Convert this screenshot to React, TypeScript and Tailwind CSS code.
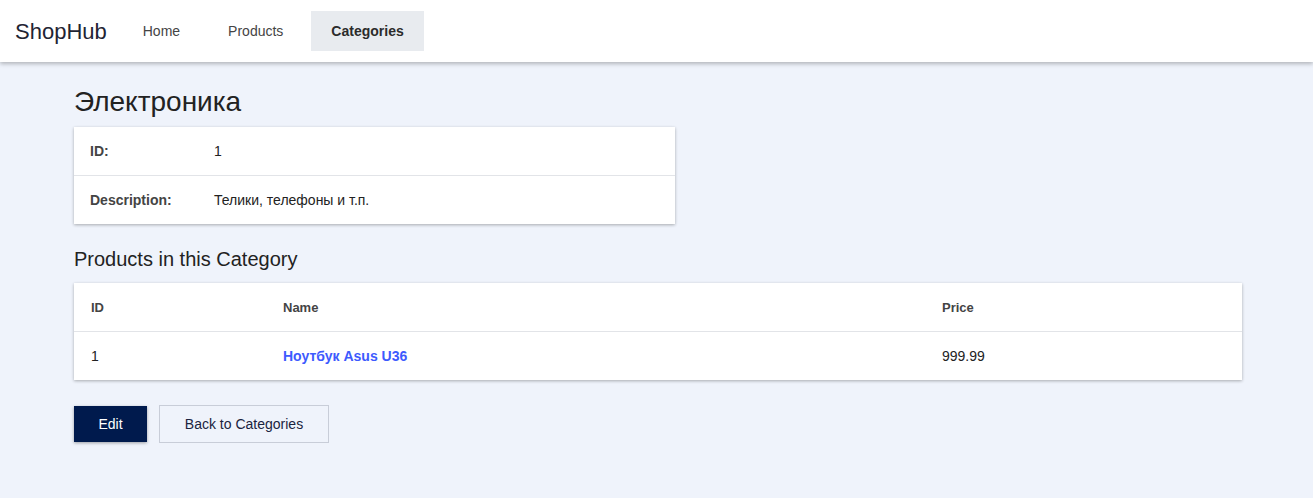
import React from "react";

export default function App() {
  const sans = { fontFamily: '"Liberation Sans", Arial, sans-serif' };
  return (
    <div className="min-h-[498px] bg-[#eff3fb]" style={sans}>
      <header className="relative z-10 flex h-[62px] items-center bg-white pl-[15px] shadow-[0_2px_4px_rgba(0,0,0,0.25)]">
        <div className="text-[22px] text-[#1f2433]">ShopHub</div>
        <nav className="ml-4 flex items-center gap-2">
          <a className="flex h-10 items-center px-5 text-sm text-[#444]">Home</a>
          <a className="flex h-10 items-center px-5 text-sm text-[#444]">Products</a>
          <a className="flex h-10 items-center bg-[#e8ebef] px-5 text-sm font-bold text-[#2b2b2b]">Categories</a>
        </nav>
      </header>
      <main className="pl-[74px] pr-[71px] pt-6">
        <h1 className="mb-[9px] text-[28px] leading-[32px] text-[#222]">Электроника</h1>
        <div className="w-[601px] bg-white shadow-[0_1px_3px_rgba(0,0,0,0.3)]">
          <div className="flex h-[49px] items-center border-b border-[#e2e4e8] px-4 text-sm">
            <div className="w-[124px] font-bold text-[#444]">ID:</div>
            <div className="text-[#222]">1</div>
          </div>
          <div className="flex h-12 items-center px-4 text-sm">
            <div className="w-[124px] font-bold text-[#444]">Description:</div>
            <div className="text-[#222]">Телики, телефоны и т.п.</div>
          </div>
        </div>
        <h2 className="mb-3 mt-6 text-[20px] leading-[23px] text-[#222]">Products in this Category</h2>
        <div className="w-[1168px] bg-white shadow-[0_1px_3px_rgba(0,0,0,0.3)]">
          <div className="flex h-[49px] items-center border-b border-[#e2e4e8] pt-[2px] text-[13px] font-bold text-[#444]">
            <div className="w-[193px] pl-[17px]">ID</div>
            <div className="w-[659px] pl-4">Name</div>
            <div className="pl-4">Price</div>
          </div>
          <div className="flex h-12 items-center text-sm text-[#222]">
            <div className="w-[193px] pl-[17px]">1</div>
            <div className="w-[659px] pl-4">
              <a className="font-bold text-[#3d5afe]">Ноутбук Asus U36</a>
            </div>
            <div className="pl-4">999.99</div>
          </div>
        </div>
        <div className="mt-[25px] flex items-center gap-3">
          <button className="h-9 w-[73px] bg-[#001a4d] text-sm text-white shadow-[0_1px_3px_rgba(0,0,0,0.35)]">Edit</button>
          <button className="h-[38px] w-[170px] border border-[#c8cdd8] text-sm text-[#1a2340]">Back to Categories</button>
        </div>
      </main>
    </div>
  );
}
